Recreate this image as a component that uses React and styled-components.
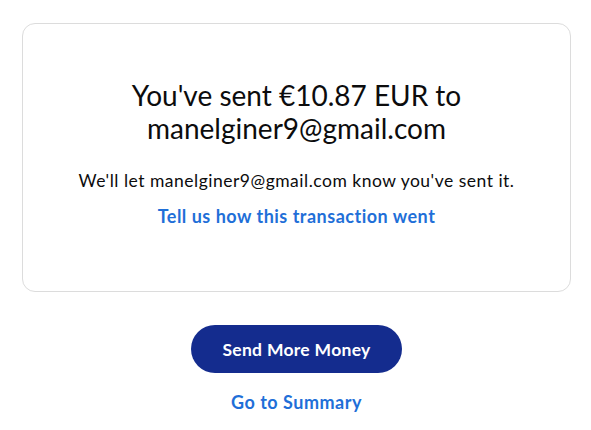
import React from 'react';
import styled, { createGlobalStyle } from 'styled-components';

const GlobalStyle = createGlobalStyle`
  body {
    margin: 0;
    background: #ffffff;
    font-family: Lato, 'Open Sans', sans-serif;
    color: #001435;
  }
`;

export default function App() {
  return (
    <Page>
      <GlobalStyle />
      <Card>
        <Title>
          You've sent €10.87 EUR to
          <br />
          manelginer9@gmail.com
        </Title>
        <Note>We'll let manelginer9@gmail.com know you've sent it.</Note>
        <TextLink href='#'>Tell us how this transaction went</TextLink>
      </Card>
      <Actions>
        <PrimaryButton>Send More Money</PrimaryButton>
        <TextLink href='#' gap={17}>
          Go to Summary
        </TextLink>
      </Actions>
    </Page>
  );
}

const Page = styled.div`
  display: flex;
  flex-direction: column;
  align-items: center;
  padding: 23px 20px 0 22px;
`;

const Card = styled.div`
  box-sizing: border-box;
  width: 549px;
  height: 269px;
  border: 1px solid #dcdcdc;
  border-radius: 13px;
  padding: 55px 16px 0;
  display: flex;
  flex-direction: column;
  align-items: center;
  text-align: center;
`;

const Title = styled.h1`
  margin: 0;
  font-size: 28px;
  line-height: 33px;
  font-weight: 400;
  color: #0c0c0d;
`;

const Note = styled.p`
  margin: 24px 0 0;
  font-size: 17.5px;
  letter-spacing: 0.5px;
  line-height: 24px;
  color: #0c0c0d;
`;

const TextLink = styled.a`
  display: block;
  margin-top: ${p => p.gap || 11}px;
  font-size: 18px;
  letter-spacing: 0.5px;
  line-height: 24px;
  font-weight: 700;
  color: #1f6fd8;
  text-decoration: none;
`;

const Actions = styled.div`
  display: flex;
  flex-direction: column;
  align-items: center;
  margin-top: 33px;
`;

const PrimaryButton = styled.button`
  width: 211px;
  height: 48px;
  border: none;
  border-radius: 24px;
  background: #142c8e;
  color: #ffffff;
  font-family: inherit;
  font-size: 17.5px;
  letter-spacing: 0.3px;
  font-weight: 700;
  cursor: pointer;
`;
